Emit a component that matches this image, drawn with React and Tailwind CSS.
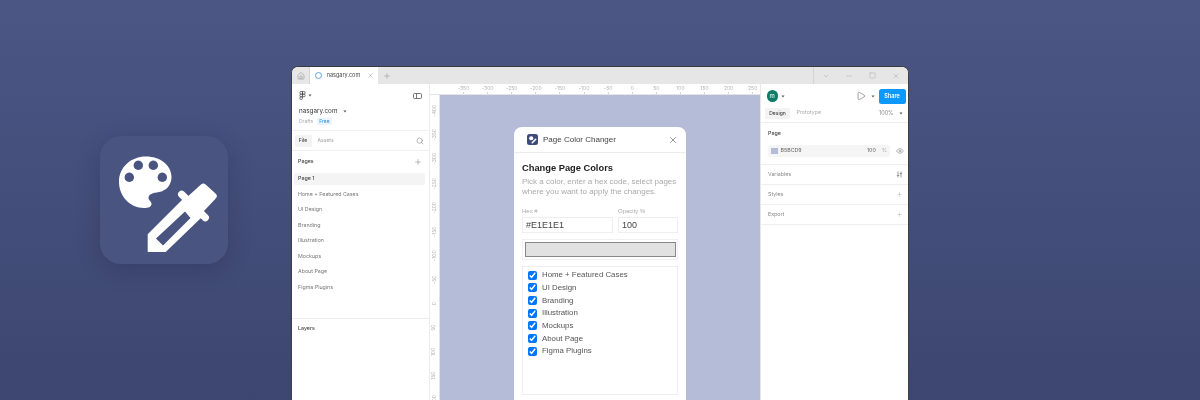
import { Home, X, Plus, Search, ChevronDown, Minus, Square, Play, Eye } from "lucide-react";

const hRuler = ["-350","-300","-250","-200","-150","-100","-50","0","50","100","150","200","250"];
const vRuler = ["-400","-350","-300","-250","-200","-150","-100","-50","0","50","100","150","200"];
const pages = ["Home + Featured Cases","UI Design","Branding","Illustration","Mockups","About Page","Figma Plugins"];

function Caret({ className = "" }) {
  return (
    <svg width="4" height="3" viewBox="0 0 4 3" className={className}>
      <path d="M0.5 0.5h3L2 2.5Z" fill="#555" />
    </svg>
  );
}

function AppIcon() {
  return (
    <svg width="128" height="128" viewBox="0 0 128 128" className="block blur-[0.35px]">
      <path fill="#fff" fillRule="evenodd" d="M46 20.5C60 20.5 71.5 29 71.5 41C71.5 49 66 55 59 56C53 57 48.5 58 48.5 62C48.5 64.5 51.5 65 51.5 68C51.5 71 48 72 44 72C30 72 19 60 19 46C19 31 31 20.5 46 20.5ZM38.3 24.6a4.7 4.7 0 1 0 .01 0ZM53.3 24.6a4.7 4.7 0 1 0 .01 0ZM29.3 36.6a4.7 4.7 0 1 0 .01 0ZM62.3 36.6a4.7 4.7 0 1 0 .01 0Z" />
      <path fill="#fff" stroke="#fff" strokeWidth="7" strokeLinejoin="round" d="M103.3 51.2L113.2 60L100 74L89 64Z" />
      <path stroke="#fff" strokeWidth="7.3" strokeLinecap="round" fill="none" d="M81.7 58.3L105.3 81.7" />
      <path fill="#fff" fillRule="evenodd" d="M47.7 98.3L83 63L102 81L65.7 116L47.7 116ZM56 102.5L63 109.5L90.5 82L85 75.5Z" />
    </svg>
  );
}

function SmallIcon() {
  return (
    <div className="w-[11px] h-[11px] rounded-[2.5px] bg-[#3f4b7c] shrink-0 flex items-center justify-center">
      <svg width="9" height="9" viewBox="0 0 128 128">
        <circle cx="46" cy="46" r="30" fill="#fff" />
        <path d="M60 110L110 60" stroke="#fff" strokeWidth="22" strokeLinecap="round" />
      </svg>
    </div>
  );
}

export default function App() {
  return (
    <div className="w-[1200px] h-[400px] overflow-hidden flex items-start bg-gradient-to-b from-[#4b5685] to-[#3c4670] font-['Inter','Liberation_Sans',sans-serif]">
      <div className="w-[128px] h-[128px] ml-[100px] mt-[136px] rounded-[21px] bg-[#495481] shadow-[0_6px_22px_rgba(30,36,70,0.28)] shrink-0">
        <AppIcon />
      </div>

      <div className="w-[618px] h-[340px] ml-[63px] mt-[66px] shrink-0 bg-white rounded-t-[7px] border-t border-x border-t-[#3b3b3b] border-x-[#3f3f3f] overflow-hidden flex flex-col">
        {/* tab bar */}
        <div className="h-[17px] bg-[#e6e6e6] flex items-stretch shrink-0 text-[#777] blur-[0.25px]">
          <div className="w-[18px] flex items-center justify-center border-r border-[#d6d6d6]">
            <Home size={8} strokeWidth={1.3} />
          </div>
          <div className="w-[68px] bg-white flex items-center pl-[5px]">
            <div className="w-[7px] h-[7px] rounded-full border-[1.5px] border-[#5aa5e0]" />
            <span className="ml-[4.7px] text-[5.5px] text-[#444] leading-none w-[37px]">nasgary.com</span>
            <X size={7} strokeWidth={1.2} className="ml-[3px]" />
          </div>
          <div className="w-[18px] flex items-center justify-center">
            <Plus size={8} strokeWidth={1.2} />
          </div>
          <div className="flex-1" />
          <div className="w-[95px] flex items-center border-l border-[#d4d4d4] text-[#999]">
            <div className="w-[24px] flex justify-center"><ChevronDown size={8} strokeWidth={1.2} /></div>
            <div className="w-[24px] flex justify-center"><Minus size={8} strokeWidth={1.2} /></div>
            <div className="w-[24px] flex justify-center"><Square size={7} strokeWidth={1.2} /></div>
            <div className="w-[24px] flex justify-center"><X size={8} strokeWidth={1.2} /></div>
          </div>
        </div>

        <div className="flex flex-1 min-h-0">
          {/* left panel */}
          <div className="w-[138px] shrink-0 border-r border-[#ececec] flex flex-col blur-[0.25px]">
            <div className="h-[47px] pl-[7px] pr-[7px] pt-[7px] border-b border-[#f0f0f0] shrink-0">
              <div className="flex items-center justify-between">
                <div className="flex items-center gap-[2px]">
                  <svg width="7" height="9" viewBox="0 0 14 20" fill="none" stroke="#444" strokeWidth="1.6">
                    <path d="M7 1H4a3 3 0 0 0 0 6h3ZM7 1h3a3 3 0 0 1 0 6H7ZM7 7H4a3 3 0 0 0 0 6h3ZM7 13H4a3 3 0 1 0 3 3ZM13 10a3 3 0 1 1-6 0a3 3 0 0 1 6 0Z" />
                  </svg>
                  <Caret />
                </div>
                <svg width="9" height="6" viewBox="0 0 9 6" fill="none" stroke="#555" strokeWidth="0.8">
                  <rect x="0.5" y="0.5" width="8" height="5" rx="1" />
                  <path d="M3.5 0.5v5" />
                </svg>
              </div>
              <div className="flex items-center gap-[6px] mt-[7px] text-[6.3px] leading-[9px] text-[#333]">
                nasgary.com <Caret />
              </div>
              <div className="flex items-center gap-[4px] mt-[2px] text-[5px] leading-[7px] text-[#aaa]">
                Drafts <span className="text-[#2a8fe8] bg-[#eaf5fe] px-[2px] rounded-[1px]">Free</span>
              </div>
            </div>
            <div className="h-[20px] flex items-center pl-[2.5px] border-b border-[#f0f0f0] shrink-0">
              <span className="w-[17px] h-[12px] bg-[#f3f3f3] rounded-[2px] flex items-center justify-center text-[5px] font-medium text-[#444]">File</span>
              <span className="ml-[6px] text-[5px] font-medium text-[#aaa]">Assets</span>
              <span className="flex-1" />
              <Search size={8} strokeWidth={1.2} className="text-[#555] mr-[5px]" />
            </div>
            <div className="h-[21.5px] flex items-center justify-between px-[6px] shrink-0">
              <span className="text-[5.3px] font-medium text-[#444]">Pages</span>
              <Plus size={8} strokeWidth={1.2} className="text-[#555] mr-[1px]" />
            </div>
            <div className="pl-[2px] pr-[4.5px] shrink-0">
              <div className="h-[12px] bg-[#f4f4f4] rounded-[2px] flex items-center px-[4px] text-[5.3px] font-medium text-[#444] mb-[4px]">Page 1</div>
              <div className="flex flex-col gap-[3.5px]">
                {pages.map((p) => (
                  <div key={p} className="h-[12px] flex items-center px-[4px] text-[5.3px] text-[#777]">{p}</div>
                ))}
              </div>
            </div>
            <div className="mt-[24px] h-[1px] bg-[#eeeeee] shrink-0" />
            <div className="px-[6px] pt-[6.5px] text-[5.3px] font-medium text-[#444]">Layers</div>
          </div>

          {/* center */}
          <div className="w-[330px] shrink-0 flex flex-col">
            <div className="h-[10.5px] pl-[10px] flex shrink-0 border-b border-[#e4e4e4] blur-[0.25px]">
              <div className="flex pl-[11.5px]">
                {hRuler.map((t) => (
                  <div key={t} className="w-[24.1px] flex flex-col items-center text-[5px] leading-[8px] text-[#b5b5b5]">
                    {t}
                    <div className="w-[1px] h-[2px] bg-[#d5d5d5]" />
                  </div>
                ))}
              </div>
            </div>
            <div className="flex-1 flex min-h-0">
              <div className="w-[10px] shrink-0 border-r border-[#e4e4e4] pt-[4.5px] flex flex-col items-center overflow-hidden blur-[0.25px]">
                {vRuler.map((t) => (
                  <div key={t} className="h-[24.1px] w-[10px] flex items-center justify-center text-[5px] text-[#b5b5b5] shrink-0">
                    <span className="-rotate-90 whitespace-nowrap">{t}</span>
                  </div>
                ))}
              </div>
              <div className="flex-1 bg-[#b5bcd8] pt-[32.5px] pl-[74px]">
                <div className="w-[172px] h-[300px] bg-white rounded-t-[8px] font-['Liberation_Sans',sans-serif] blur-[0.15px]">
                  <div className="h-[26px] flex items-center pl-[13px] pr-[8px] border-b border-[#ececec]">
                    <SmallIcon />
                    <span className="ml-[5px] text-[8px] text-[#444] flex-1">Page Color Changer</span>
                    <X size={10} strokeWidth={1.2} className="text-[#333]" />
                  </div>
                  <div className="px-[8px] pt-[8.5px]">
                    <div className="text-[9.3px] leading-[12px] font-bold text-[#222]">Change Page Colors</div>
                    <div className="mt-[3.5px] w-[158px] text-[8px] leading-[10px] text-[#aaa]">Pick a color, enter a hex code, select pages where you want to apply the changes.</div>
                    <div className="flex gap-[5.5px] mt-[9.7px]">
                      <div className="w-[90.5px]">
                        <div className="text-[6px] leading-[8px] text-[#aaa]">Hex #</div>
                        <div className="mt-[2.6px] h-[16px] border border-[#eeeeee] flex items-center px-[3px] text-[9px] text-[#444]">#E1E1E1</div>
                      </div>
                      <div className="w-[60px]">
                        <div className="text-[6px] leading-[8px] text-[#aaa]">Opacity %</div>
                        <div className="mt-[2.6px] h-[16px] border border-[#eeeeee] flex items-center px-[3px] text-[9px] text-[#444]">100</div>
                      </div>
                    </div>
                    <div className="mt-[6px] h-[20.7px] w-[156px] border border-[#f0f0f0] p-[1.5px]">
                      <div className="h-full bg-[#e1e1e1] border border-[#888]" />
                    </div>
                    <div className="mt-[5.7px] w-[156px] h-[129.3px] border border-[#eeeeee] pt-[2.3px] pl-[5px]">
                      {pages.map((p) => (
                        <label key={p} className="h-[12.67px] flex items-center gap-[5px] text-[7.85px] text-[#555]">
                          <input type="checkbox" defaultChecked readOnly className="w-[9px] h-[9px] m-0 accent-[#0075ff]" />
                          {p}
                        </label>
                      ))}
                    </div>
                  </div>
                </div>
              </div>
            </div>
          </div>

          {/* right panel */}
          <div className="flex-1 flex flex-col border-l border-[#e8e8e8] blur-[0.25px]">
            <div className="h-[39px] border-b border-[#eeeeee] pl-[4px] pr-[2.5px] pt-[4px] shrink-0">
              <div className="flex items-center h-[16px]">
                <div className="ml-[1.5px] w-[11.5px] h-[11.5px] rounded-full bg-[#0f7c68] flex items-center justify-center text-[6px] text-white leading-none">m</div>
                <Caret className="ml-[3px]" />
                <span className="flex-1" />
                <Play size={10} strokeWidth={1.2} className="text-[#444]" />
                <Caret className="ml-[5px] mr-[4px]" />
                <div className="w-[27px] h-[15px] rounded-[2.5px] bg-[#0d99ff] text-white text-[5.5px] font-semibold flex items-center justify-center">Share</div>
              </div>
              <div className="flex items-center mt-[3.5px] h-[11.5px]">
                <span className="w-[25px] h-[11.5px] bg-[#f3f3f3] rounded-[2px] flex items-center justify-center text-[5px] font-medium text-[#444]">Design</span>
                <span className="ml-[6.5px] text-[5.3px] text-[#aaa]">Prototype</span>
                <span className="flex-1" />
                <span className="text-[5.5px] text-[#888]">100%</span>
                <Caret className="ml-[5px] mr-[3px]" />
              </div>
            </div>
            <div className="h-[42px] border-b border-[#eeeeee] pl-[7px] pt-[7px] shrink-0">
              <div className="text-[5.3px] leading-[7px] font-medium text-[#444]">Page</div>
              <div className="flex items-center mt-[8px]">
                <div className="w-[122px] h-[11.5px] bg-[#f5f5f5] rounded-[2px] flex items-center pl-[3px] pr-[3px] text-[5.3px] text-[#666]">
                  <div className="w-[6.5px] h-[6.5px] bg-[#b5bcd8] mr-[3px]" />
                  B5BCD9
                  <span className="flex-1" />
                  100 <span className="ml-[6px] text-[#aaa]">%</span>
                </div>
                <Eye size={8} strokeWidth={1.2} className="ml-[6px] text-[#555]" />
              </div>
            </div>
            {[["Variables", "v"], ["Styles", "p"], ["Export", "p"]].map(([l, k]) => (
              <div key={l} className="h-[20px] border-b border-[#f0f0f0] flex items-center justify-between pl-[7px] pr-[5px] text-[5.3px] text-[#888] shrink-0">
                {l}
                {k === "v" ? (
                  <svg width="7" height="7" viewBox="0 0 7 7" fill="none" stroke="#777" strokeWidth="0.7">
                    <path d="M2 0.5v6M0.8 4.5h2.4M5 0.5v6M3.8 2.5h2.4" />
                  </svg>
                ) : (
                  <Plus size={7} strokeWidth={1.2} className="text-[#999]" />
                )}
              </div>
            ))}
          </div>
        </div>
      </div>
    </div>
  );
}
